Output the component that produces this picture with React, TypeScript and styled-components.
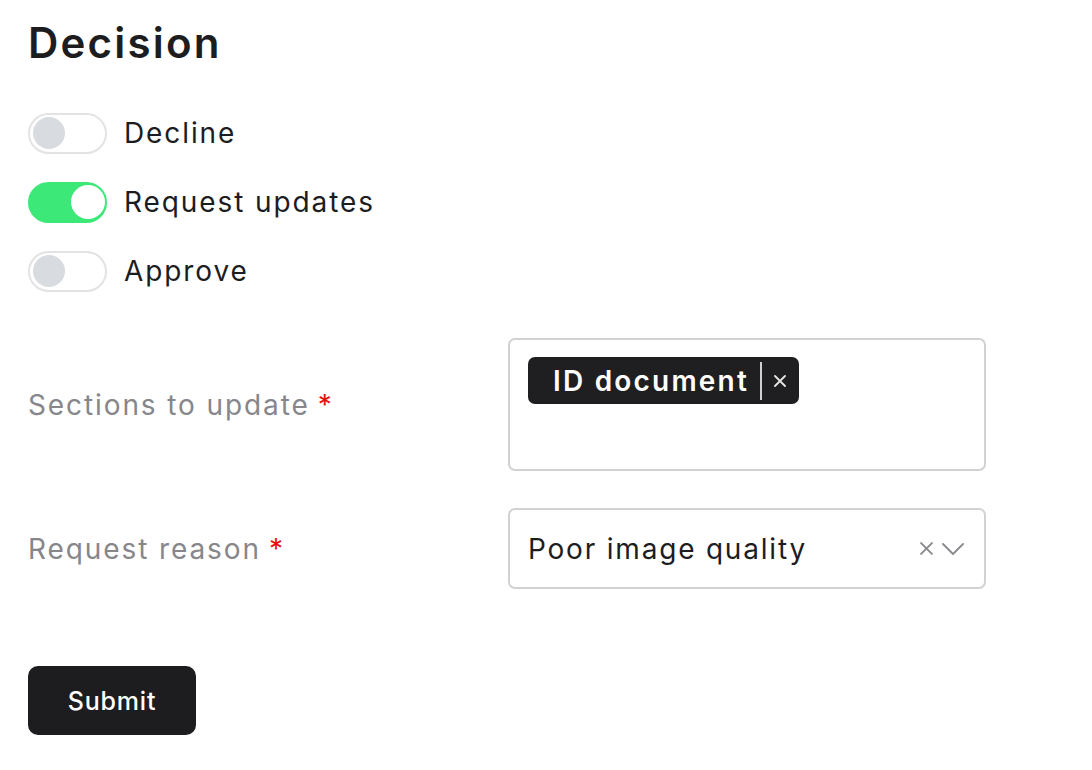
import styled, { createGlobalStyle } from "styled-components";

const GlobalStyle = createGlobalStyle`
  * { box-sizing: border-box; }
  body {
    margin: 0;
    background: #ffffff;
    font-family: Inter, "Noto Sans", "Liberation Sans", sans-serif;
    color: #1d1d1f;
  }
`;

const Page = styled.div`
  display: flex;
  flex-direction: column;
  padding: 17px 28px 0;
`;

const Title = styled.h1`
  margin: 0;
  font-size: 42px;
  font-weight: 600;
  line-height: 51px;
  letter-spacing: 2.2px;
`;

const ToggleList = styled.div`
  display: flex;
  flex-direction: column;
  gap: 27px;
  margin-top: 44px;
`;

const ToggleRow = styled.label`
  display: flex;
  align-items: center;
  gap: 17px;
  height: 42px;
  font-size: 28px;
  letter-spacing: 1.9px;
  cursor: pointer;
`;

const Track = styled.span<{ $on: boolean }>`
  position: relative;
  display: inline-block;
  width: 79px;
  height: 41px;
  border-radius: 21px;
  border: 2px solid ${(p) => (p.$on ? "#3ce878" : "#e3e3e5")};
  background: ${(p) => (p.$on ? "#3ce878" : "#ffffff")};
`;

const Knob = styled.span<{ $on: boolean }>`
  position: absolute;
  left: ${(p) => (p.$on ? "41px" : "3px")};
  top: ${(p) => (p.$on ? "1.5px" : "2.5px")};
  width: ${(p) => (p.$on ? "34px" : "32px")};
  height: ${(p) => (p.$on ? "34px" : "32px")};
  border-radius: 50%;
  background: ${(p) => (p.$on ? "#ffffff" : "#d8dbdf")};
`;

const Form = styled.div`
  display: flex;
  flex-direction: column;
  gap: 37px;
  margin-top: 46px;
`;

const FieldRow = styled.div`
  display: grid;
  grid-template-columns: 480px 478px;
  align-items: center;
`;

const FieldLabel = styled.span`
  font-size: 28px;
  letter-spacing: 1.9px;
  color: #86868b;
`;

const Required = styled.span`
  color: #e8120c;
  margin-left: 8px;
`;

const Box = styled.div<{ $tall?: boolean }>`
  display: flex;
  align-items: ${(p) => (p.$tall ? "flex-start" : "center")};
  height: ${(p) => (p.$tall ? "133px" : "81px")};
  padding: ${(p) => (p.$tall ? "17px 18px" : "0 18px")};
  border: 2px solid #d2d2d4;
  border-radius: 7px;
  background: #ffffff;
`;

const Chip = styled.span`
  display: inline-flex;
  align-items: center;
  height: 47px;
  padding: 0 13px 0 25px;
  border-radius: 7px;
  background: #1f1f21;
  color: #ffffff;
  font-size: 28px;
  font-weight: 600;
  letter-spacing: 2.2px;
`;

const ChipDivider = styled.span`
  width: 1.5px;
  height: 38px;
  margin: 0 12px 0 11px;
  background: #d0d0d0;
`;

const Value = styled.span`
  flex: 1;
  font-size: 28px;
  letter-spacing: 1.8px;
  color: #1d1d1f;
`;

const Indicators = styled.span`
  display: flex;
  align-items: center;
  gap: 9px;
  margin-right: 2px;
  color: #8a8a8e;
`;

const SubmitButton = styled.button`
  align-self: flex-start;
  margin-top: 77px;
  width: 168px;
  height: 69px;
  border: none;
  border-radius: 10px;
  background: #1d1d1f;
  color: #ffffff;
  font-family: inherit;
  font-size: 25px;
  font-weight: 500;
  letter-spacing: 0.8px;
  cursor: pointer;
`;

function Cross({ size = 12, color = "currentColor" }: { size?: number; color?: string }) {
  return (
    <svg width={size} height={size} viewBox="0 0 12 12">
      <path d="M1 1L11 11M11 1L1 11" stroke={color} strokeWidth="1.8" strokeLinecap="round" />
    </svg>
  );
}

function Chevron() {
  return (
    <svg width="22" height="12" viewBox="0 0 22 12">
      <path d="M1 1L11 11L21 1" fill="none" stroke="currentColor" strokeWidth="1.8" strokeLinecap="round" strokeLinejoin="round" />
    </svg>
  );
}

function Toggle({ label, on }: { label: string; on: boolean }) {
  return (
    <ToggleRow>
      <Track $on={on}>
        <Knob $on={on} />
      </Track>
      {label}
    </ToggleRow>
  );
}

export default function App() {
  return (
    <>
      <GlobalStyle />
      <Page>
        <Title>Decision</Title>
        <ToggleList>
          <Toggle label="Decline" on={false} />
          <Toggle label="Request updates" on />
          <Toggle label="Approve" on={false} />
        </ToggleList>
        <Form>
          <FieldRow>
            <FieldLabel>
              Sections to update<Required>*</Required>
            </FieldLabel>
            <Box $tall>
              <Chip>
                ID document
                <ChipDivider />
                <Cross size={12} color="#e6e6e6" />
              </Chip>
            </Box>
          </FieldRow>
          <FieldRow>
            <FieldLabel>
              Request reason<Required>*</Required>
            </FieldLabel>
            <Box>
              <Value>Poor image quality</Value>
              <Indicators>
                <Cross size={13} />
                <Chevron />
              </Indicators>
            </Box>
          </FieldRow>
        </Form>
        <SubmitButton>Submit</SubmitButton>
      </Page>
    </>
  );
}
